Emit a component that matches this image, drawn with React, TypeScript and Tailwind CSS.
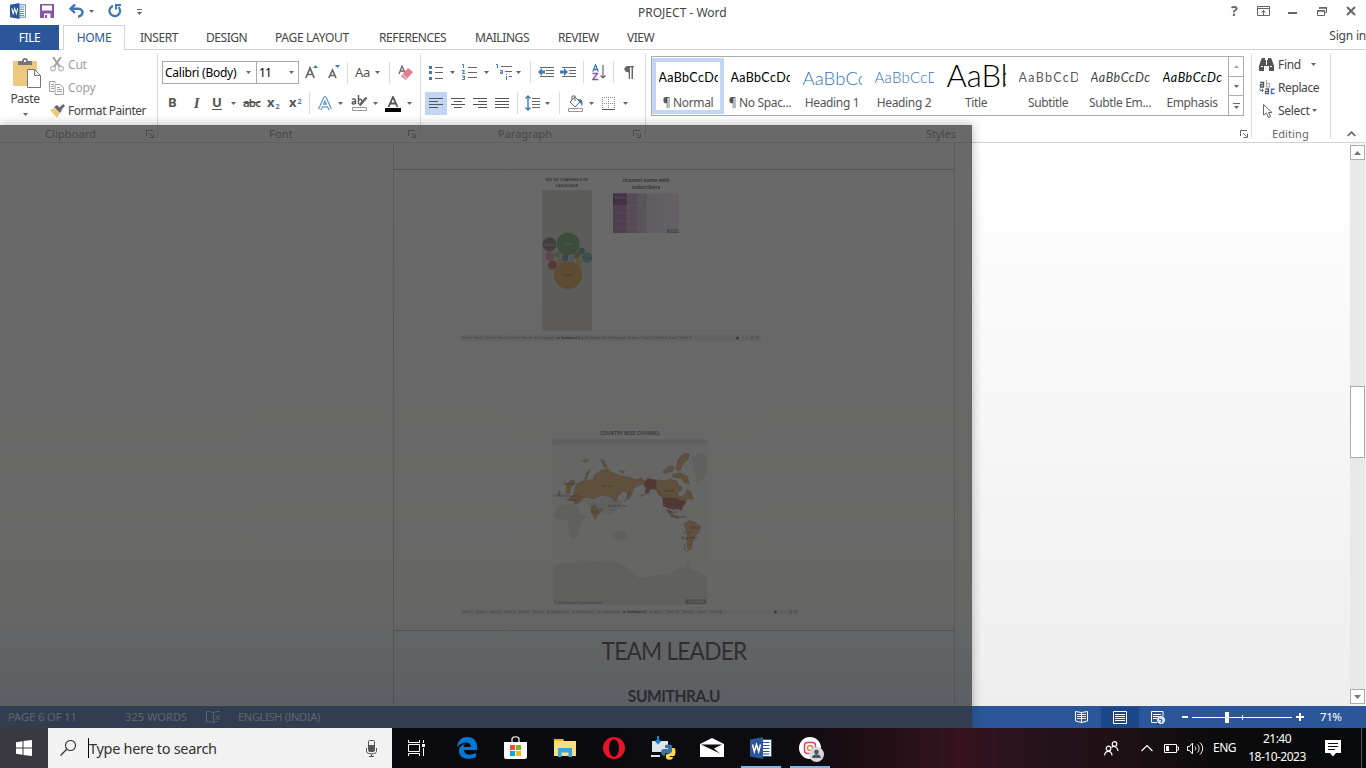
import type { ReactNode } from "react";

const UI = "font-['Noto_Sans',sans-serif]";
const BODY = "font-[Lato,'Noto_Sans',sans-serif]";

type IcoProps = { w: number; h: number; c?: string; children: ReactNode };
const Ico = ({ w, h, c = "", children }: IcoProps) => (
  <svg width={w} height={h} viewBox={`0 0 ${w} ${h}`} className={`block shrink-0 ${c}`} fill="none">
    {children}
  </svg>
);

const Caret = ({ c = "", color = "#666" }: { c?: string; color?: string }) => (
  <Ico w={5} h={3} c={c}><path d="M0 0h5L2.5 3z" fill={color} /></Ico>
);

const Sep = ({ c = "" }: { c?: string }) => <div className={`h-[22px] w-px shrink-0 bg-[#dcdcdc] ${c}`} />;

const Launcher = () => (
  <Ico w={8} h={8}><path d="M.5 6V.5H7M3 3l3.500 3.500M7.500 3.500V7.500H3.500" stroke="#666" /></Ico>
);

const WordLogo = ({ s }: { s: number }) => (
  <svg width={s} height={s} viewBox="0 0 22 22" className="block shrink-0">
    <path d="M12 2.500h9.500v17H12z" fill="#fff" stroke="#2b579a" />
    <path d="M13 5.500h6.500M13 8.500h6.500M13 11.500h6.500M13 14.500h6.500M13 17h6.500" stroke="#2b579a" />
    <path d="M0 2.500L13 0v22L0 19.500z" fill="#2b579a" />
    <path d="M2.500 7.500l1.800 7 2.200-7 2.200 7 1.800-7" stroke="#fff" strokeWidth="1.500" fill="none" />
  </svg>
);

function TitleBar() {
  return (
    <div className="flex h-[25px] items-center">
      <div className="-mt-[3px] ml-[10px]"><WordLogo s={16} /></div>
      <Ico w={14} h={14} c="-mt-[3px] ml-[14px]">
        <path d="M0 0h14v14H0z" fill="#8655a8" /><path d="M3 1.500h9v5H2v-5zM4 9.500h6.500V14H4z" fill="#fff" /><path d="M5 11h2v3H5z" fill="#8655a8" />
      </Ico>
      <Ico w={15} h={14} c="-mt-[3px] ml-[15px]">
        <path d="M6 .5L1.500 4.700 6 9M2 4.700h7c6 0 6 7 0 8" stroke="#3e78b8" strokeWidth="2.400" />
      </Ico>
      <Caret c="-mt-[3px] ml-[5px]" />
      <Ico w={14} h={14} c="-mt-[3px] ml-[14px]">
        <path d="M5 1.800A5.300 5.300 0 1 0 10.500 3" stroke="#3e78b8" strokeWidth="2.300" /><path d="M8 5.500V1h5" stroke="#3e78b8" strokeWidth="2" />
      </Ico>
      <Ico w={6} h={6} c="-mt-[1px] ml-[15px]"><path d="M0 .5h5" stroke="#666" /><path d="M0 3h5L2.500 6z" fill="#666" /></Ico>
      <div className="ml-[495px] w-[100px] text-[12px] text-[#444]">PROJECT - Word</div>
      <div className="-mt-[3px] ml-auto mr-[10px] flex items-center text-[#666]">
        <span className="w-[10px] text-[14px] font-bold leading-none">?</span>
        <Ico w={13} h={10} c="ml-[16px]"><path d="M.5.5h12v9H.5zM.5 2.500h12M6.500 9V4.500M4.500 6.500l2-2 2 2" stroke="#666" /></Ico>
        <Ico w={9} h={2} c="ml-[18px] mt-[4px]"><path d="M0 0h9v2H0z" fill="#666" /></Ico>
        <Ico w={10} h={9} c="ml-[20px]"><path d="M2.500 2V.5h7v5H8M.5 3.500h7v5h-7z" stroke="#666" /><path d="M0 4h8M2 1h8" stroke="#666" strokeWidth="1.500" /></Ico>
        <Ico w={10} h={10} c="ml-[19px]"><path d="M1 1l8 8M9 1L1 9" stroke="#666" strokeWidth="2" /></Ico>
      </div>
    </div>
  );
}

const TABS: [string, string][] = [
  ["INSERT", "ml-[15px] w-[66px] tracking-[-0.45px]"],
  ["DESIGN", "w-[69px] tracking-[-0.45px]"],
  ["PAGE LAYOUT", "w-[104px] tracking-[-0.3px]"],
  ["REFERENCES", "w-[96px] tracking-[-0.4px]"],
  ["MAILINGS", "w-[83px] tracking-[-0.42px]"],
  ["REVIEW", "w-[69px] tracking-[-0.42px]"],
  ["VIEW", "tracking-[-0.5px]"],
];

function TabBar() {
  return (
    <div className="flex h-[25px] text-[12px] leading-[25px] text-[#444] shadow-[inset_0_-1px_0_#d4d4d4]">
      <div className="w-[59px] bg-[#2b579a] text-center tracking-[-0.4px] text-white">FILE</div>
      <div className="ml-[4px] w-[62px] border border-b-0 border-[#d4d4d4] bg-white text-center leading-[23px] tracking-[-0.3px] text-[#2b579a]">HOME</div>
      {TABS.map(([t, c]) => <div key={t} className={`whitespace-nowrap ${c}`}>{t}</div>)}
      <div className="-mt-[2px] ml-auto h-[22px] tracking-[-0.2px]">Sign in</div>
    </div>
  );
}

type GroupProps = { c: string; label: string; labelC: string; launcher?: boolean; children: ReactNode };
const Group = ({ c, label, labelC, launcher = true, children }: GroupProps) => (
  <div className={`flex h-[92px] shrink-0 flex-col ${c}`}>
    <div className="h-[76px]">{children}</div>
    <div className="flex h-[16px] items-center text-[11px] leading-[16px] text-[#666]">
      <span className={labelC}>{label}</span>
      {launcher && <Launcher />}
    </div>
  </div>
);
const GroupLine = () => <div className="mt-[4px] h-[84px] w-px shrink-0 bg-[#dcdcdc]" />;

function Clipboard() {
  return (
    <Group c="w-[157px]" label="Clipboard" labelC="ml-[45px] w-[101px] tracking-[0.1px]">
      <div className="flex">
        <div className="ml-[8px] flex w-[34px] flex-col items-center pt-[8px]">
          <Ico w={28} h={31} c="ml-[4px]">
            <path d="M0 3h24v25H0z" fill="#edc87e" /><path d="M5 3h4c0-4 6-4 6 0h4v4H5z" fill="#777" /><path d="M11 2h2v2h-2z" fill="#fff" />
            <path d="M14.500 11.500h7l6 6v12h-13z" fill="#fff" stroke="#777" /><path d="M21.500 11.500v6h6" stroke="#777" />
          </Ico>
          <span className="mt-[1px] text-[12px] leading-[18px] tracking-[-0.35px] text-[#444]">Paste</span>
          <Caret c="mt-[5px]" />
        </div>
        <div className="ml-[8px] flex flex-col pt-[3px] text-[12px] leading-[23px]">
          <div className="flex h-[23px] items-center text-[#a0a0a0]">
            <Ico w={14} h={15} c="mr-[4px]"><path d="M3 0l7 10M11 0L4 10" stroke="#a0a0a0" strokeWidth="2" /><circle cx="3" cy="11.500" r="2.500" stroke="#a0a0a0" /><circle cx="11" cy="11.500" r="2.500" stroke="#a0a0a0" /></Ico>
            <span className="tracking-[-0.2px]">Cut</span>
          </div>
          <div className="flex h-[23px] items-center text-[#a0a0a0]">
            <Ico w={15} h={14} c="-ml-px mr-[4px]"><path d="M6 2.500V.5H.5v10H5M2 3.500h3M2 5.500h3M2 7.500h3M6 3.500h5l3.500 3v7H6zM8 6.500h3M8 8.500h5M8 10.500h5" stroke="#a0a0a0" /></Ico>
            <span className="tracking-[-0.15px]">Copy</span>
          </div>
          <div className="flex h-[23px] items-center text-[#444]">
            <Ico w={15} h={14} c="mr-[3px]"><path d="M0 6l4-2 6 5-3 5z" fill="#edc87e" /><path d="M4 3l3-2 5 5-2 3z" fill="#666" /><path d="M9 4l4-4 2 2-4 4z" fill="#666" /></Ico>
            <span className="whitespace-nowrap tracking-[-0.45px]">Format Painter</span>
          </div>
        </div>
      </div>
    </Group>
  );
}

function FontGroup() {
  return (
    <Group c="w-[262px]" label="Font" labelC="ml-[111px] w-[139px] tracking-[0.2px]">
      <div className="ml-[4px] flex h-[23px] translate-y-[11px] items-center">
        <div className="flex h-[23px] w-[95px] items-center border border-[#ababab] text-[12px] text-black">
          <span className="ml-[2px] w-[81px] whitespace-nowrap tracking-[-0.25px]">Calibri (Body)</span><Caret />
        </div>
        <div className="-ml-px flex h-[23px] w-[43px] items-center border border-[#ababab] text-[12px] text-black">
          <span className="ml-[2px] w-[30px] tracking-[-0.8px]">11</span><Caret />
        </div>
        <Ico w={13} h={15} c="ml-[6px]"><path d="M.8 13L5 3l4.200 10M2 9.500h6" stroke="#666" strokeWidth="1.700" /><path d="M8 3h5L10.500 0z" fill="#3e78b8" /></Ico>
        <Ico w={12} h={15} c="ml-[10px]"><path d="M.8 13L4.500 5 8 13M2 10.500h5" stroke="#666" strokeWidth="1.600" /><path d="M7 0h5L9.500 3z" fill="#3e78b8" /></Ico>
        <Sep c="ml-[7px]" />
        <span className="ml-[7px] w-[20px] text-[13px] tracking-[-0.3px] text-[#555]">Aa</span>
        <Caret />
        <Sep c="ml-[9px]" />
        <Ico w={15} h={15} c="ml-[8px]"><path d="M1 9L4 1l3 7M2 6h4" stroke="#666" strokeWidth="1.300" /><path d="M3 11l7-8 5 4-7 8z" fill="#e8798f" /><path d="M4.500 9.500l4.500 4" stroke="#fff" /></Ico>
      </div>
      <div className="ml-[10px] flex h-[24px] translate-y-[18px] items-center text-[#555]">
        <span className="w-[22px] text-[13px] font-bold">B</span>
        <span className="w-[22px] font-['Liberation_Serif',serif] text-[15px] font-bold italic">&nbsp;I</span>
        <span className="w-[19px] text-[13px] font-bold underline underline-offset-2">U</span>
        <Caret />
        <span className="ml-[7px] w-[24px] text-[11.5px] font-semibold tracking-[-0.9px] line-through">abc</span>
        <span className="w-[22px] text-[13px] font-bold">x<sub className="ml-px text-[7px] text-[#3e78b8]">2</sub></span>
        <span className="w-[20px] text-[13px] font-bold">x<sup className="ml-px text-[7px] text-[#3e78b8]">2</sup></span>
        <Sep />
        <Ico w={14} h={15} c="ml-[8px] mt-[1px]"><path d="M1.800 13.500L7 2l5.200 11.500M3.500 9.500h7" stroke="#5b93cf" strokeWidth="3.800" strokeLinejoin="round" /><path d="M1.800 13.500L7 2l5.200 11.500M3.500 9.500h7" stroke="#fff" strokeWidth="1.500" /></Ico>
        <Caret c="ml-[6px]" />
        <Ico w={17} h={17} c="ml-[8px]">
          <path d="M4.500 9V5.500c0-2-2.500-2-3.500-1M4.500 6.500c-4-.5-4 2.500-2 2.500 1 0 2-.5 2-1M7.500 0v9M7.500 5c2.500-2 4 0 3 3" stroke="#555" strokeWidth="1.400" /><path d="M15.500 2.500L8.500 10.500" stroke="#666" strokeWidth="2.600" /><path d="M1.500 12.500h14v3h-14z" fill="#fff" stroke="#999" />
        </Ico>
        <Caret c="ml-[5px]" />
        <Ico w={16} h={16} c="ml-[7px] mt-[2px]"><path d="M3.500 11L8 1l4.500 10M5 7.500h6" stroke="#555" strokeWidth="1.800" /><path d="M0 12h16v4H0z" fill="#000" /></Ico>
        <Caret c="ml-[6px]" />
      </div>
    </Group>
  );
}

const Lines = ({ d }: { d: string }) => <Ico w={14} h={12}><path d={d} stroke="#555" /></Ico>;

function Paragraph() {
  return (
    <Group c="w-[224px]" label="Paragraph" labelC="ml-[77px] w-[135px]">
      <div className="ml-[8px] flex h-[22px] translate-y-[11px] items-center">
        <Ico w={14} h={15}><path d="M6 2.500h8M6 7.500h8M6 13.500h8" stroke="#666" /><path d="M0 1h3v3H0zM0 6h3v3H0zM0 12h3v3H0z" fill="#3e78b8" /></Ico>
        <Caret c="ml-[7px]" />
        <Ico w={15} h={16} c="ml-[7px]"><path d="M6 3.500h9M6 8.500h9M6 13.500h9" stroke="#666" /><path d="M0 .5h1.500V4M0 6.500h2.500L.5 9.500H3M0 12h2.500v3.500H0M1 13.500h1.500" stroke="#3e78b8" /></Ico>
        <Caret c="ml-[7px]" />
        <Ico w={17} h={16} c="ml-[7px]"><path d="M5 2.500h11M9 7.500h7M13 12.500h3" stroke="#666" /><path d="M0 .5h1.500V4M4 6.500h2.500v3H4.500v-1.500h2M10.500 10v1M10.500 12v4" stroke="#3e78b8" /></Ico>
        <Caret c="ml-[3px]" />
        <Sep c="ml-[9px]" />
        <Ico w={16} h={12} c="ml-[7px]"><path d="M2 1.500h14M8 4.500h8M8 7.500h8M2 10.500h14" stroke="#666" /><path d="M0 6l4-4v2.500h3v3H4V10z" fill="#3e78b8" /></Ico>
        <Ico w={16} h={12} c="ml-[6px]"><path d="M2 1.500h14M9 4.500h7M9 7.500h7M2 10.500h14" stroke="#666" /><path d="M8 6L4 2v2.500H0v3h4V10z" fill="#3e78b8" /></Ico>
        <Sep c="ml-[7px]" />
        <Ico w={14} h={17} c="ml-[8px]"><path d="M.8 7.500L3.500.8l2.700 6.700M1.500 5.500h4" stroke="#3e78b8" strokeWidth="1.300" /><path d="M.5 9.500h5L.8 15.500h5.500" stroke="#8655a8" strokeWidth="1.400" /><path d="M11 1v13M8.500 11.500L11 14l2.500-2.500" stroke="#666" strokeWidth="1.200" /></Ico>
        <Sep c="ml-[7px]" />
        <Ico w={10} h={13} c="ml-[10px]"><path d="M4 0h6v1.300H9V13H7.500V1.300H6V13H4.700V6.500C-1 6.500-1 0 4 0z" fill="#666" /></Ico>
      </div>
      <div className="ml-[4px] flex h-[24px] translate-y-[19px] items-center">
        <div className="grid h-[23px] w-[22px] place-items-center bg-[#c2d5f2]"><Lines d="M0 1.500h14M0 4.500h9M0 7.500h14M0 10.500h9" /></div>
        <div className="ml-[4px]"><Lines d="M0 1.500h14M3 4.500h8M0 7.500h14M3 10.500h8" /></div>
        <div className="ml-[8px]"><Lines d="M0 1.500h14M5 4.500h9M0 7.500h14M5 10.500h9" /></div>
        <div className="ml-[8px]"><Lines d="M0 1.500h14M0 4.500h14M0 7.500h14M0 10.500h14" /></div>
        <Sep c="ml-[8px]" />
        <Ico w={15} h={16} c="ml-[7px]"><path d="M7 3.500h8M7 6.500h8M7 9.500h8M7 12.500h8" stroke="#666" /><path d="M3 1v14M.5 3.500L3 1l2.500 2.500M.5 12.500L3 15l2.500-2.500" stroke="#3e78b8" strokeWidth="1.400" /></Ico>
        <Caret c="ml-[5px]" />
        <Sep c="ml-[9px]" />
        <Ico w={17} h={17} c="ml-[7px]"><path d="M3 7l5-5 5 5-5 5zM5 5V1h3v5" stroke="#666" /><path d="M11 4c5 0 5 3 4 8-1-3-1-4-3-5z" fill="#3e78b8" /><path d="M1.500 13.500h14v3h-14z" fill="#fff" stroke="#999" /></Ico>
        <Caret c="ml-[5px]" />
        <Ico w={13} h={13} c="ml-[8px]"><path d="M0 .5h13M0 6.500h13M.5 0v12M6.500 0v12M12.500 0v12" stroke="#888" strokeDasharray="1 1" /><path d="M0 12.500h13" stroke="#555" /></Ico>
        <Caret c="ml-[8px]" />
      </div>
    </Group>
  );
}

const STYLES: [string, string, string][] = [
  ["AaBbCcDc", "¶ Normal", "pt-[2px] text-[12.5px] text-black tracking-[0.35px]"],
  ["AaBbCcDc", "¶ No Spac...", "pt-[2px] text-[12.5px] text-black tracking-[0.35px]"],
  ["AaBbCc", "Heading 1", "pt-[2px] text-[18.5px] font-light text-[#2e74b5] tracking-[0.1px]"],
  ["AaBbCcD", "Heading 2", "text-[15px] font-light text-[#2e74b5] tracking-[0.25px]"],
  ["AaBb", "Title", "pb-[4px] text-[31px] font-light text-black"],
  ["AaBbCcD", "Subtitle", "pt-[2px] text-[12.5px] text-[#5a5a5a] tracking-[1.3px]"],
  ["AaBbCcDc", "Subtle Em...", "pt-[2px] text-[12.5px] italic text-[#404040] tracking-[0.55px]"],
  ["AaBbCcDc", "Emphasis", "pt-[2px] text-[12.5px] italic text-black tracking-[0.55px]"],
];

function Styles() {
  return (
    <Group c="w-[605px]" label="Styles" labelC="ml-[280px] w-[314px]">
      <div className="ml-[5px] flex h-[60px] w-[593px] translate-y-[6px] border border-[#ababab]">
        {STYLES.map(([s, n, c], i) => (
          <div key={n} className={`mt-px flex h-[56px] w-[72px] shrink-0 flex-col items-center ${i === 0 ? "shadow-[inset_0_0_0_4px_#c2d5f2]" : ""}`}>
            <div className={`flex h-[38px] w-[59px] items-center overflow-hidden whitespace-nowrap leading-[38px] ${BODY} ${c}`}>{s}</div>
            <div className="whitespace-nowrap text-[12px] leading-[14px] tracking-[-0.35px] text-[#555]">{n}</div>
          </div>
        ))}
        <div className="ml-auto flex w-[15px] flex-col border-l border-[#ababab]">
          <div className="grid h-[20px] place-items-center border-b border-[#ababab]"><Caret c="rotate-180" color="#aaa" /></div>
          <div className="grid h-[19px] place-items-center border-b border-[#ababab]"><Caret /></div>
          <div className="grid h-[19px] place-items-center"><Ico w={7} h={6}><path d="M0 .5h7" stroke="#666" /><path d="M1 3h5L3.500 6z" fill="#666" /></Ico></div>
        </div>
      </div>
    </Group>
  );
}

function Editing() {
  return (
    <Group c="w-[78px]" label="Editing" labelC="ml-[20px] tracking-[0.1px]" launcher={false}>
      <div className="flex flex-col pl-[7px] pt-[3px] text-[12px] leading-[23px] tracking-[-0.3px] text-[#444]">
        <div className="flex h-[23px] items-center">
          <Ico w={15} h={13} c="mr-[4px]"><path d="M2 2l1-2h3v2h3V0h3l1 2 2 6v5h-5V8H5v5H0V8z" fill="#555" /><path d="M7.500 1v6M2 8.500h2M11 8.500h2" stroke="#fff" /></Ico>
          <span className="w-[33px]">Find</span><Caret />
        </div>
        <div className="flex h-[23px] items-center">
          <Ico w={16} h={15} c="mr-[3px]">
            <path d="M1 2.500h3.500V7H1.500V4.700h3" stroke="#555" strokeWidth="1.300" /><path d="M7.500 0v7h3V3.500h-3" stroke="#aaa" strokeWidth="1.200" />
            <path d="M1 8.500v2h3M3 9l1.500 1.500L3 12" stroke="#3e78b8" /><path d="M6.500 9h3v4.700h-3v-2.400h3" stroke="#555" strokeWidth="1.300" /><path d="M15.500 9.200h-3v4.300h3" stroke="#3e78b8" strokeWidth="1.500" />
          </Ico>
          <span className="tracking-[-0.4px]">Replace</span>
        </div>
        <div className="flex h-[23px] items-center">
          <Ico w={10} h={14} c="ml-[4px] mr-[5px]"><path d="M.5.500v10.500L3.500 9l2 4.500L7.500 12.500 5.500 8.500H9z" stroke="#666" /></Ico>
          <span className="w-[34px]">Select</span><Caret />
        </div>
      </div>
    </Group>
  );
}

function Ribbon() {
  return (
    <div className="flex h-[93px] border-b border-[#d4d4d4]">
      <Clipboard /><GroupLine /><FontGroup /><GroupLine /><Paragraph /><GroupLine />
      <Styles /><GroupLine /><Editing /><GroupLine />
      <Ico w={9} h={6} c="ml-[16px] mt-[81px]"><path d="M.7 5l3.800-3.800L8.300 5" stroke="#666" strokeWidth="1.700" /></Ico>
    </div>
  );
}

const BUBBLES: [number, number, number, string][] = [
  [109.500, 79.500, 7, "#4c4340"], [128, 79, 11.500, "#2f7d28"], [110, 91, 4.500, "#c4625c"], [117.500, 89.500, 3, "#5f9a58"],
  [112.500, 100, 4.500, "#a82229"], [119, 96, 3, "#cb8d5a"], [125, 93, 3.200, "#355c95"], [131.500, 94, 3, "#88a4c2"],
  [137, 90.500, 3.200, "#8a6810"], [141.500, 86, 3.200, "#1f6d69"], [147, 92.500, 5.200, "#3e8b80"], [139, 97, 3.200, "#b89e35"],
  [128, 110, 14, "#c87608"],
];

const SHEETS_A = ["Sheet 1", "Sheet 2", "Sheet 3", "Sheet 4", "Sheet 5", "Sheet 6", "⊞ Dashboard 1", "⊞ Dashboard 2", "⊞ Dashboard 3", "⊞ Dashboard 6", "⊞ Story 1", "Sheet 10", "Sheet 6", "Sheet 7", "Sheet 8"];
const SHEETS_B = ["Sheet 1", "Sheet 2", "Sheet 3", "Sheet 4", "Sheet 5", "Sheet 6", "⊞ Dashboard 1", "⊞ Dashboard 2", "⊞ Dashboard 3", "⊞ Dashboard 4", "⊞ Story 1", "Sheet 10", "Sheet 6", "Sheet 7", "Sheet 8"];

const SheetBar = ({ items, active, c }: { items: string[]; active: number; c: string }) => (
  <div className={`flex h-[6px] shrink-0 items-center whitespace-nowrap bg-[#e2e2e2] pl-px text-[3px] leading-[6px] text-[#333] ${c}`}>
    {items.map((t, i) => <span key={i} className={i === active ? "font-bold text-black" : ""}>{t}</span>)}
    <Ico w={28} h={4} c="ml-auto mr-px"><path d="M1 2h1M11 2h1M15 2h1M19.500.500h2v3h-2zM24.500.500h2v2h-2z" stroke="#777" strokeWidth=".6" /><circle cx="5.500" cy="2" r="1.500" fill="#222" /></Ico>
  </div>
);

function Charts() {
  return (
    <svg width="300" height="164" viewBox="0 5 300 164" className="block" fontFamily="Noto Sans, sans-serif">
      <g fontWeight="700" fill="#111" textAnchor="middle">
        <text x="127" y="15.500" fontSize="4.100" textLength="43" lengthAdjust="spacingAndGlyphs">NO OF CHANNELS OF</text><text x="127" y="21.500" fontSize="4.100">LANGUAGE</text>
        <text x="206" y="16.500" fontSize="5" textLength="47">channel name with</text><text x="206" y="23.500" fontSize="5">subscribers</text>
      </g>
      <path d="M102 25h50v141h-50z" fill="#c6c4c1" />
      {BUBBLES.map(([x, y, r, f], i) => <circle key={i} cx={x} cy={y} r={r} fill={f} />)}
      <g fontSize="3" textAnchor="middle" fill="#222"><text x="128" y="111">English</text><text x="128" y="80" fill="#ccc">Hindi</text><text x="109.500" y="81" fill="#bbb">Spanish</text><text x="147" y="94">Korean</text></g>
      <path d="M173 28.500h66v39.500h-66z" fill="#dccde0" />
      <path d="M173 28.500h14V68h-14z" fill="#804088" /><path d="M173 28.500h14V40h-14z" fill="#4d0456" />
      <path d="M187 28.500h11V68h-11z" fill="#a974ab" /><path d="M198 28.500h9V68h-9z" fill="#c09cc4" /><path d="M223 28.500h16V68h-16z" fill="#e2d8e5" />
      <path d="M173 48h66M173 56h66M173 63h66M187 28.500V68M198 28.500V68M207 28.500V68M215 28.500V68M223 28.500V68M231 28.500V68M187 35h52M187 41h52" stroke="#e5dce8" strokeWidth=".3" />
      <text x="175" y="33.500" fontSize="3" fill="#ddd">T-Series</text>
      <path d="M227 64h12v4h-12z" fill="#777" /><text x="229" y="67" fontSize="2.800" fill="#fff">YouTube</text>
    </svg>
  );
}

function WorldMap() {
  return (
    <svg width="156" height="180" viewBox="0 0 156 180" className="block" fontFamily="Noto Sans, sans-serif">
      <g transform="translate(-112 -8) scale(.33333)">
        <path d="M337 57h465v498H337z" fill="#f0efef" /><path d="M337 57h465v18H337z" fill="#dcd5dc" />
        <text x="570" y="46" fontSize="13" fontWeight="700" textAnchor="middle" fill="#111" textLength="178">COUNTRY WISE CHANNEL</text>
        <g fill="#d4d4d4">
          <path d="M343 275l12-18 30-6 25 4 12 26 20 5-18 24-8 22-6 20-14 8-10-20-4-38-28-6-14-10zM513 345l16-16 28 4 6 22-12 8-30-8zM755 110l30-12 16 12v50l-14 16-14 22-8-40zM428 240l60-10 60 12-12 24-30 20-12-4-24-14-20-6z" />
          <path d="M341 436L361 428L401 430L426 420L446 428L486 422L526 424L551 436L581 456L596 474L621 470L651 464L690 462L715 446L736 440L744 416L750 444L775 456L802 470V554H341z" />
        </g>
        <g fill="#d68a30" stroke="#665540" strokeWidth="1.500">
          <path d="M400 232l4-26 8-16 14-6 34-6 4-14 18-12 20-6 14 12 20 8 30 6 24 8 14-6 8 8-4 10-18 6-10 8-6 22-10 10-2-20-14-4-14 14-6 18-18-16-26-4-24 10-22-4-14 4-14 16-8-2z" />
          <path d="M378 216l2-22 10-12 14-2-2 12-10 8-2 18-8 4zM434 178l4-18 14-12-8 16-4 14zM482 118l8 2 12 22-10-2zM538 152l16 2-6 6zM386 240l8-12 10 6 4 12zM456 258l10-2 6 14 16-4-8 12-8 6-6 14-8-14-6-12zM353 224l4-12 4 8-2 8zM414 232l12-2-2 14-8 4z" />
          <path d="M648 180l24 2 20-4 20 6 2 12 12 4-2 12-14 6 8 14 18-8 4-14 12 4 8 24-14-2-18 10-12-2-48-10-14-12-6-18z" />
          <path d="M708 146l8-30 18-16 14 2-4 16-14 12-10 22zM668 156l18-18 18 4-8 12-22 6zM696 164l24-6 22 12 6 22-14-4-10-14-24-2z" />
          <path d="M680 268l12 4 10 14 14 4-2 6-18-8-12-10zM732 312l14-10 18 4 8 8 10 4-4 16-12 14-8 16-4 22-6 6-6-8-2-28 4-16-6-12z" />
        </g>
        <g fill="#942412" stroke="#5b201a" strokeWidth="1.500">
          <path d="M612 186l12-10 24 4v28l-16-2-10 14-8-6 6-10-8-6z" /><path d="M668 234h42l10 8 18 2-8 14-6 14-10-6-14 2-16-4-14-6z" />
        </g>
        <path d="M648 208l10 8 10 16M733 372l2 18 8 4M598 230l14-6 18-8M552 246l10-16 10-18M424 124l16-6 6 4-14 4" stroke="#333" strokeWidth="2" fill="none" />
        <g fontSize="10" fill="#222">
          <text x="485" y="201">Russia</text><text x="668" y="216">Canada</text><text x="674" y="254">United States</text><text x="503" y="261">South Korea</text><text x="453" y="278">India</text><text x="340" y="231">United Kingdom</text><text x="378" y="243">Ukraine</text><text x="372" y="195">Sweden</text><text x="682" y="280">Mexico</text><text x="690" y="293">El Salvador</text><text x="752" y="326">Brazil</text><text x="729" y="341">Chile</text><text x="725" y="356">Argentina</text>
          <text x="342" y="552" fontSize="9">© 2023 Mapbox © OpenStreetMap</text>
        </g>
        <path d="M735 538h63v14h-63z" fill="#777" /><path d="M746 542h46v6h-46z" fill="#bbb" />
      </g>
    </svg>
  );
}

const BarLine = ({ c }: { c: string }) => <div className={`h-px shrink-0 bg-[#a5a5a5] ${c}`} />;

function Document() {
  return (
    <div className="flex h-[563px] bg-linear-to-b from-white to-[#eee]">
      <div className="ml-[393px] flex w-[562px] flex-col border-x border-[#b5b5b5]">
        <BarLine c="mt-[26px]" />
        <div className="ml-[46px] h-[164px] shrink-0"><Charts /></div>
        <SheetBar items={SHEETS_A} active={7} c="ml-[67px] mt-px w-[300px] gap-[1.5px]" />
        <div className="ml-[158px] mt-[87px] h-[180px] shrink-0"><WorldMap /></div>
        <SheetBar items={SHEETS_B} active={9} c="ml-[67px] mt-px w-[338px] gap-[3.7px]" />
        <BarLine c="mt-[15px]" />
        <div className={`mt-[2px] scale-x-[0.91] text-center text-[25px] leading-[34px] tracking-[-0.9px] text-black ${BODY}`}>TEAM LEADER</div>
        <div className={`mt-[20px] scale-x-[0.91] text-center text-[17px] font-bold leading-[18px] tracking-[-0.4px] text-black ${BODY}`}>SUMITHRA.U</div>
      </div>
      <div className="ml-auto flex w-[16px] flex-col bg-[#f5f5f5] pr-px pt-[2px]">
        <div className="grid h-[15px] place-items-center border border-[#ababab] bg-white"><Ico w={7} h={4}><path d="M0 4h7L3.500 0z" fill="#777" /></Ico></div>
        <div className="h-[226px] bg-[#e9e9e9]" />
        <div className="h-[72px] border border-[#ababab] bg-white" />
        <div className="h-[231px] bg-[#e9e9e9]" />
        <div className="grid h-[15px] place-items-center border border-[#ababab] bg-white"><Ico w={7} h={4}><path d="M0 0h7L3.500 4z" fill="#777" /></Ico></div>
      </div>
    </div>
  );
}

function StatusBar() {
  return (
    <div className="flex h-[22px] items-center whitespace-nowrap bg-[#2b579a] text-[11px] leading-[20px] text-white">
      <span className="ml-[8px] w-[117px]">PAGE 6 OF 11</span>
      <span className="w-[81px] tracking-[0.1px]">325 WORDS</span>
      <Ico w={15} h={13}><path d="M7.500 11.500V2C5 .5 3 .5.500.500v10c3 0 5 0 7 1.500C9 10.500 11 10.500 12 10.500M7.500 2C9 .5 12 .5 14 .500M9.500 4l4.500 5M14 4L9.500 9" stroke="#fff" /></Ico>
      <span className="ml-[17px] tracking-[-0.3px]">ENGLISH (INDIA)</span>
      <Ico w={13} h={12} c="ml-auto"><path d="M6.500 11.500V1.500L.500.500v9.500l6 1.500 6-1.500V.500L6.500 1.500" stroke="#fff" /><path d="M2 3.500h9M2 5.500h9M2 7.500h9" stroke="#fff" strokeOpacity=".85" /></Ico>
      <div className="ml-[13px] grid h-[21px] w-[38px] place-items-center bg-[#19478a]"><Ico w={14} h={13}><path d="M.5.500h13v12H.500zM2 3.500h10M2 5.500h10M2 7.500h10M2 9.500h10" stroke="#fff" /></Ico></div>
      <Ico w={14} h={13} c="ml-[12px]"><path d="M12 5V.500H.500v11H6M2 3.500h8M2 5.500h6M2 7.500h4" stroke="#fff" /><circle cx="10" cy="9" r="3.500" fill="#c8d8ee" stroke="#fff" /><path d="M8 8l3 1-1 3" stroke="#2b579a" /></Ico>
      <Ico w={6} h={2} c="ml-[17px]"><path d="M0 0h6v2H0z" fill="#fff" /></Ico>
      <Ico w={100} h={12} c="ml-[4px]"><path d="M0 6.500h100M50.500 4v5" stroke="#fff" /><path d="M33 1h4v11h-4z" fill="#fff" /></Ico>
      <Ico w={8} h={8} c="ml-[4px]"><path d="M4 0v8M0 4h8" stroke="#fff" strokeWidth="2" /></Ico>
      <span className="ml-[16px] w-[46px] text-[11.5px] tracking-[-0.4px]">71%</span>
    </div>
  );
}

function Taskbar() {
  return (
    <div className="flex h-[40px] items-center bg-[linear-gradient(90deg,#090a0d_0,#0b0b10_780px,#1a0d12_850px,#35131f_960px,#25121b_1040px,#1c1014_1130px,#0b0b0c_1220px,#08090a_100%)] text-white">
      <div className="grid h-[40px] w-[48px] place-items-center bg-[#3b3940]"><Ico w={16} h={16}><path d="M0 2.300l6.500-1v6.200H0zM7.500 1.100L16 0v7.500H7.500zM0 8.500h6.500v6.200L0 13.700zM7.500 8.500H16V16l-8.500-1.100z" fill="#fff" /></Ico></div>
      <div className="flex h-[40px] w-[344px] items-center bg-[#f2f2f2]">
        <Ico w={16} h={16} c="ml-[12px]"><circle cx="10.500" cy="5.500" r="5" stroke="#333" strokeWidth="1.100" /><path d="M7 9L.5 15.500" stroke="#333" strokeWidth="1.200" /></Ico>
        <div className="ml-[12px] h-[20px] w-px bg-black" />
        <span className="w-[277px] pt-[2px] text-[14.500px] tracking-[-0.3px] text-[#333]">Type here to search</span>
        <Ico w={11} h={17}><rect x="2.500" y=".5" width="6" height="11" rx="1" stroke="#555" fill="#f2f2f2" /><path d="M3 5h5v6H3z" fill="#555" /><path d="M.5 8v3.500c0 3 10 3 10 0V8M5.500 14v3M3 16.500h5" stroke="#555" /></Ico>
      </div>
      <Ico w={17} h={16} c="ml-[16px]"><path d="M.5 0v2.500h11V0M.500 4.500h11v7H.500zM.500 16v-2.500h11V16M15.500 0v3M15.500 8v8" stroke="#fff" /><path d="M14 4h3v3h-3z" fill="#fff" /></Ico>
      <Ico w={21} h={22} c="ml-[32px]"><path d="M0 10C1 3 5 0 10.500 0 17 0 21 5 20 13H7c0 5 6 6 12 3v4C10 24 2 21 2 14c0-4 3-6 6-7-1 1-1.500 2-1.500 3H14c0-6-9-6-14 0z" fill="#0078d7" /></Ico>
      <Ico w={23} h={23} c="ml-[26px] -mt-[2px]"><path d="M8 7V3c0-3 7-3 7 0v4" stroke="#fff" strokeWidth="1.200" /><path d="M0 6h23v15q0 2-2 2H2q-2 0-2-2z" fill="#fff" /><path d="M6 9h5v5H6z" fill="#f25022" /><path d="M12 9h5v5h-5z" fill="#7fba00" /><path d="M6 15h5v5H6z" fill="#00a4ef" /><path d="M12 15h5v5h-5z" fill="#ffb900" /></Ico>
      <Ico w={22} h={20} c="ml-[27px]"><path d="M0 1h9l1 2h12v15H0z" fill="#f9dd85" /><path d="M0 1h9v2H0z" fill="#edb524" /><path d="M4 19v-9h14v9h-3.500v-4.500h-7V19z" fill="#35a5dc" /></Ico>
      <Ico w={22} h={22} c="ml-[27px]"><ellipse cx="11" cy="11" rx="11" ry="11" fill="#e5142b" /><ellipse cx="11" cy="11" rx="5" ry="8.800" fill="#0a0a0e" /></Ico>
      <Ico w={25} h={24} c="ml-[26px]">
        <path d="M1 5h16v11H1zM0 19h9v2H0z" fill="#dfe5e8" /><path d="M7 0v7M4.500 4.500L7 7l2.500-2.500" stroke="#1685cf" strokeWidth="2" />
        <path d="M14 10c0-2 7-2 7 0v5c0 2-2 2-5 2-2 0-2 1-2 3-5 0-5-7-1-7h4v-1h-3z" fill="#3974a8" /><path d="M21 12h2c2 0 2 7 0 8h-4v1h3c0 4-7 3-7 1v-3c0-2 6-1 6-4z" fill="#ffd94b" />
      </Ico>
      <Ico w={24} h={20} c="ml-[24px]"><path d="M0 6l12-6 12 6v13H0z" fill="#fff" /><path d="M1 6.500h21l-8 4 6 5z" fill="#0b0b10" /></Ico>
      <div className="ml-[17px] flex h-[40px] w-[40px] flex-col items-center justify-between border-b-2 border-[#76b9ed] pt-[9px]"><WordLogo s={22} /></div>
      <div className="ml-[9px] flex h-[40px] w-[40px] flex-col items-center border-b-2 border-[#76b9ed] pt-[9px]">
        <Ico w={25} h={25} c="ml-[2px]"><circle cx="11" cy="11" r="11" fill="#fff" /><rect x="5.500" y="5.500" width="11" height="11" rx="3" stroke="#d6406f" strokeWidth="1.500" /><circle cx="11" cy="11" r="2.500" stroke="#e88342" strokeWidth="1.500" /><circle cx="17.500" cy="17.500" r="7.500" fill="#d5d8dd" /><circle cx="17.500" cy="15" r="2.300" fill="#4a5463" /><path d="M13 21c0-5 9-5 9 0z" fill="#4a5463" /></Ico>
      </div>
      <Ico w={15} h={15} c="ml-auto"><circle cx="4.500" cy="7.500" r="2.300" stroke="#fff" strokeWidth="1.200" /><path d="M.7 14.500C.7 9 8 9 8 14.500M7.500 6.500c2-2 6-1 6.500 3.500" stroke="#fff" strokeWidth="1.200" /><circle cx="10.500" cy="3" r="2.300" stroke="#fff" strokeWidth="1.200" /></Ico>
      <Ico w={12} h={8} c="ml-[22px]"><path d="M.5 7L6 1.500 11.500 7" stroke="#fff" strokeWidth="1.200" /></Ico>
      <Ico w={15} h={9} c="ml-[11px]"><path d="M.5.500h12v8H.500zM13 3h1.500v3H13" stroke="#fff" /><path d="M2 2h3v5H2z" fill="#fff" /></Ico>
      <Ico w={17} h={13} c="ml-[8px]"><path d="M.5 4.500h2l3-3.500v11l-3-3.500h-2zM8 4.500c1 1 1 3 0 4M10.500 2.500c2 2 2 6 0 8M13 .500c3.500 3.500 3.500 8.500 0 12" stroke="#fff" /></Ico>
      <span className="ml-[9px] w-[30px] text-[12px] tracking-[-0.500px]">ENG</span>
      <div className="flex w-[68px] flex-col items-center whitespace-nowrap text-[12px] leading-[18px] tracking-[-0.500px]"><span>21:40</span><span>18-10-2023</span></div>
      <Ico w={16} h={17} c="ml-[14px]"><path d="M0 0h16v13h-5l-3 3.500L5 13H0z" fill="#fff" /><path d="M3 3.500h10M3 6.500h10M3 9.500h7" stroke="#111" /></Ico>
      <div className="ml-[20px] mr-[4px] h-[40px] w-px bg-[#555]" />
    </div>
  );
}

export default function App() {
  return (
    <div className={`relative h-[768px] w-[1366px] overflow-hidden bg-white ${UI}`}>
      <TitleBar />
      <TabBar />
      <Ribbon />
      <Document />
      <StatusBar />
      <Taskbar />
      <div className="absolute left-0 top-[125px] h-[603px] w-[972px] bg-[linear-gradient(180deg,rgba(63,63,63,.78)_0,rgba(63,63,62,.78)_80%,rgba(50,54,61,.78)_97%)] shadow-[0_0_10px_rgba(0,0,0,.3)] [clip-path:inset(-14px_-10px_0_0)]" />
    </div>
  );
}
